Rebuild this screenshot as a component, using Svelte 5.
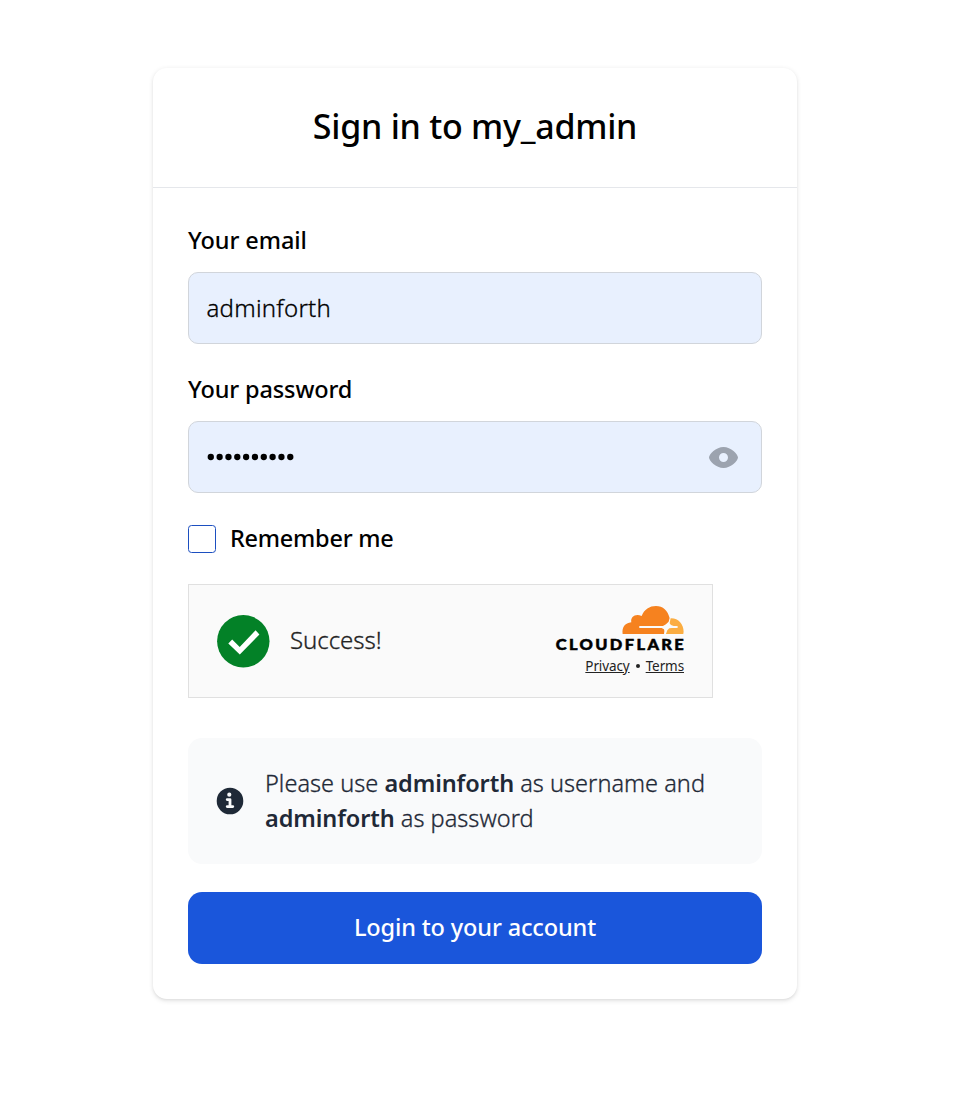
<script>
  let email = $state('adminforth');
  let password = $state('adminforth');
  let remember = $state(false);
  let visible = $state(false);
</script>

<main>
  <section class="card">
    <header><h1>Sign in to my_admin</h1></header>
    <form onsubmit={(e) => e.preventDefault()}>
      <label class="label" for="email"><span class="l1">Your email</span></label>
      <input id="email" class="field" bind:value={email} />
      <label class="label second" for="password"><span class="l2">Your password</span></label>
      <div class="field password">
        {#if visible}
          <span class="plain">{password}</span>
        {:else}
          <svg class="dots" width="90" height="8" viewBox="0 0 90 8" aria-label="password">
            {#each password as _, i}<circle cx={3.800 + i * 8.830} cy="4" r="3.150" />{/each}
          </svg>
        {/if}
        <button type="button" class="eye" aria-label="Toggle" onclick={() => (visible = !visible)}>
          <svg width="29" height="21" viewBox="0 0 29 21"><path fill="#9ca3af" fill-rule="evenodd" d="M14.500 0C22 0 29 7.300 29 10.500C29 13.700 22 21 14.500 21C7 21 0 13.700 0 10.500C0 7.300 7 0 14.500 0ZM14.500 6A4.500 4.500 0 1 0 14.500 15A4.500 4.500 0 1 0 14.500 6Z" /></svg>
        </button>
      </div>
      <label class="remember">
        <input type="checkbox" bind:checked={remember} />
        <span>Remember me</span>
      </label>
      <div class="turnstile">
        <svg class="check" width="53" height="53" viewBox="0 0 53 53"><circle cx="26.300" cy="26.300" r="26.200" fill="#038127" /><path fill="#fff" d="M11.300 28.600 15.200 24.600 22.700 32 38.600 15.300 42.400 19.400 22.800 39.600Z" /></svg>
        <span class="success">Success!</span>
        <div class="brand">
          <svg width="130" height="50" viewBox="0 0 130 50">
            <g transform="translate(67.300 1) scale(.3333)">
              <path fill="#f6821f" d="M1 84C-2 64 8 51 27 49C24 33 39 22 58 30C66 10 82 0 101 0C122 0 137 14 142 36L139 47L131 55L122 60H54Q50 60 50 63T54 66H118L125 70Q128 76 125 84Z" />
              <path fill="#fbad41" d="M145 37C168 36 184 55 184 77L183 84H131L135 73L141 67L149 66H162Q167 66 167 63T162 60H154L146 57L142 52Z" />
            </g>
            <text x="0.700" y="45" textLength="130.500" lengthAdjust="spacingAndGlyphs">CLOUDFLARE</text>
          </svg>
          <div class="links"><u>Privacy</u><b></b><u>Terms</u></div>
        </div>
      </div>
      <div class="notice">
        <svg width="28" height="28" viewBox="0 0 20 20"><path fill="#1f2937" d="M10 .5a9.500 9.500 0 1 0 9.500 9.500A9.510 9.510 0 0 0 10 .5ZM9.500 4a1.500 1.500 0 1 1 0 3 1.500 1.500 0 0 1 0-3ZM12 15H8a1 1 0 0 1 0-2h1v-3H8a1 1 0 0 1 0-2h2a1 1 0 0 1 1 1v4h1a1 1 0 0 1 0 2Z" /></svg>
        <p><span class="n1">Please use <strong>adminforth</strong> as username and</span><br /><span class="n2"><strong>adminforth</strong> as password</span></p>
      </div>
      <button class="login"><span>Login to your account</span></button>
    </form>
  </section>
</main>

<style>
  :global(body) { background: #fff; }
  * { box-sizing: border-box; }
  main { height: 1103px; padding: 68px 0 0 153px; font-family: "Noto Sans", "Open Sans", sans-serif; color: #000; }
  .card { width: 644px; height: 931px; border-radius: 14px; background: #fff; box-shadow: 0 1.750px 5.250px rgba(0,0,0,.1), 0 1.750px 3.500px -1.750px rgba(0,0,0,.1); }
  header { height: 120px; padding-bottom: 3px; border-bottom: 1px solid #e5e7eb; display: flex; align-items: center; justify-content: center; }
  h1 { margin: 0; font-size: 34px; line-height: 52px; font-weight: 500; letter-spacing: -.26px; white-space: nowrap; }
  form { padding: 35px 35px 0; }
  .label { display: block; height: 35px; line-height: 35px; margin-bottom: 14px; font-size: 23.500px; font-weight: 500; white-space: nowrap; }
  .second { margin-top: 28px; }
  .l1 { letter-spacing: -.08px; }
  .l2 { letter-spacing: -.13px; }
  .field { display: block; width: 574px; height: 72px; margin: 0; padding: 0 17.500px 2px; border: 1px solid #d1d5db; border-radius: 10px; background: #e8f0fe; color: #000; font: 300 24px/35px "Noto Sans", sans-serif; letter-spacing: .25px; -webkit-text-stroke: .3px #000; outline: none; }
  .password { display: flex; align-items: center; justify-content: space-between; padding: 0 23px 0 18px; }
  .eye { display: flex; padding: 0; border: 0; background: none; }
  .remember { display: flex; align-items: center; gap: 14px; height: 35px; margin: 28px 0; font-size: 23.500px; font-weight: 500; letter-spacing: -.25px; white-space: nowrap; }
  .remember span { padding-bottom: 1px; }
  .remember input { appearance: none; width: 28px; height: 28px; margin: 1px 0 0; border: 1px solid #1c4fc0; border-radius: 3.500px; }
  .turnstile { display: flex; align-items: center; width: 525px; height: 114px; padding: 0 27px 0 28px; border: 1px solid #e0e0e0; background: #fafafa; color: #232323; }
  .success { margin-left: 20px; padding-bottom: 3px; font-size: 24px; font-weight: 300; letter-spacing: -.05px; -webkit-text-stroke: .3px #232323; }
  .brand { margin-left: auto; width: 130px; height: 72px; }
  .brand svg { display: block; }
  .brand text { font: 900 15px Lato, sans-serif; letter-spacing: 2.200px; fill: #000; stroke: #000; stroke-width: .5px; }
  .links { display: flex; justify-content: flex-end; align-items: center; width: 129px; height: 21px; font-size: 13.500px; line-height: 20px; letter-spacing: -.1px; text-underline-offset: 1px; }
  .links b { width: 4px; height: 4px; margin: 0 6px; border-radius: 50%; background: #232323; }
  .notice { display: flex; align-items: center; gap: 21px; width: 574px; height: 126px; margin: 40px 0 28px; padding: 0 28px; border-radius: 14px; background: #f9fafb; color: #1f2937; }
  .notice svg { flex: none; }
  p { margin: 0; font-size: 23.500px; line-height: 35px; font-weight: 300; letter-spacing: .03px; -webkit-text-stroke: .3px #1f2937; white-space: nowrap; }
  strong { font-weight: 600; letter-spacing: -.1px; -webkit-text-stroke: 0; }
  .login { width: 574px; height: 72px; padding: 0 0 2px; border: 0; border-radius: 14px; background: #1a56db; color: #fff; font: 500 23.500px/35px "Noto Sans", sans-serif; letter-spacing: -.14px; }
</style>
